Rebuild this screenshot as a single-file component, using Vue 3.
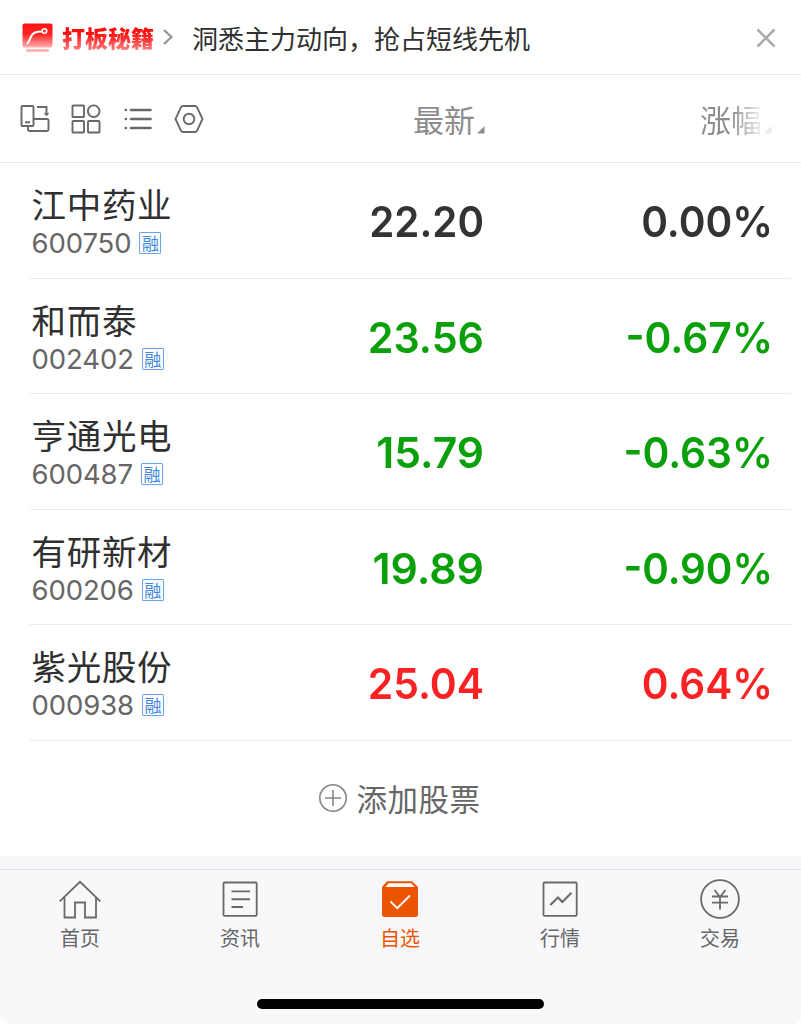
<script setup>
const stocks = [
  { name: '江中药业', code: '600750', price: '22.20', change: '0.00%', tone: 'flat', priceScale: 0.937, changeScale: 0.944 },
  { name: '和而泰', code: '002402', price: '23.56', change: '-0.67%', tone: 'down', priceScale: 0.96, changeScale: 0.951 },
  { name: '亨通光电', code: '600487', price: '15.79', change: '-0.63%', tone: 'down', priceScale: 0.99, changeScale: 0.948 },
  { name: '有研新材', code: '600206', price: '19.89', change: '-0.90%', tone: 'down', priceScale: 0.995, changeScale: 0.938 },
  { name: '紫光股份', code: '000938', price: '25.04', change: '0.64%', tone: 'up', priceScale: 0.95, changeScale: 0.944 },
]
const tabs = [
  { id: 'home', label: '首页' },
  { id: 'news', label: '资讯' },
  { id: 'picks', label: '自选' },
  { id: 'market', label: '行情' },
  { id: 'trade', label: '交易' },
]
</script>

<template>
  <div class="screen">
    <section class="banner">
      <svg class="promo-icon" width="32" height="30" viewBox="0 0 32 30">
        <defs>
          <linearGradient id="promoFill" x1="0" y1="0" x2="0" y2="1">
            <stop offset="0" stop-color="#ff1010" />
            <stop offset="0.45" stop-color="#ff2424" />
            <stop offset="1" stop-color="#ffb0b0" />
          </linearGradient>
        </defs>
        <rect x="0.5" y="0.5" width="30" height="24" rx="2" fill="url(#promoFill)" />
        <path d="M5.500 20.300C8 18.500 8 11.500 13 9.500C15.500 8.400 18 8.500 20.500 8.500" fill="none" stroke="#fff" stroke-width="2" stroke-linecap="round" />
        <circle cx="22.500" cy="8" r="2.300" fill="#ff3030" stroke="#fff" stroke-width="1.500" />
        <rect x="4" y="26.300" width="23" height="2.500" rx="1.200" fill="#ffaaaa" />
      </svg>
      <strong class="promo">打板秘籍</strong>
      <svg class="arrow" width="12" height="18" viewBox="0 0 12 18"><path d="M2 2L9.500 9L2 16" fill="none" stroke="#929292" stroke-width="2.200" /></svg>
      <span class="slogan">洞悉主力动向，抢占短线先机</span>
      <svg class="close" width="20" height="20" viewBox="0 0 20 20"><path d="M1.500 1.500L18.500 18.500M18.500 1.500L1.500 18.500" stroke="#aaa" stroke-width="2.500" /></svg>
    </section>

    <section class="toolbar">
      <div class="tools">
        <svg width="30" height="30" viewBox="0 0 30 30">
          <rect x="1.500" y="2" width="12" height="20" rx="1" />
          <path d="M5 18.300H10M17 3H26.500V10M14 15H27Q28.500 15 28.500 16.500V25.500Q28.500 27 27 27H9.500Q8 27 8 25.500V22" />
          <path d="M24 9.200H29L26.500 12Z" fill="#696969" stroke-width="0.500" />
        </svg>
        <svg width="30" height="30" viewBox="0 0 30 30">
          <rect x="1.500" y="1.500" width="11.500" height="11.500" rx="0.800" /><circle cx="22.700" cy="7.200" r="5.800" />
          <rect x="1.500" y="17" width="11.500" height="11.500" rx="0.800" /><rect x="17" y="17" width="11.500" height="11.500" rx="0.800" />
        </svg>
        <svg class="list-icon" width="30" height="30" viewBox="0 0 30 30"><path d="M8 6H27.500M8 15H27.500M8 24H27.500M2.800 6H2.900M2.800 15H2.900M2.800 24H2.900" /></svg>
        <svg width="30" height="30" viewBox="0 0 30 30"><path d="M9 2H21Q22.200 2 23 3.200L28.500 15L23 26.800Q22.200 28 21 28H9Q7.800 28 7 26.800L1.500 15L7 3.200Q7.800 2 9 2Z" /><circle cx="15" cy="15" r="5.300" /></svg>
      </div>
      <div class="heading latest">最新<svg width="8" height="8" viewBox="0 0 8 8"><path d="M7.500 0V7.500H0Z" fill="#8d8d94" /></svg></div>
      <div class="heading rise"><span>涨幅</span><svg width="8" height="8" viewBox="0 0 8 8"><path d="M7.500 0V7.500H0Z" fill="#eaeaea" /></svg></div>
    </section>

    <main>
      <article v-for="s in stocks" :key="s.code" class="stock">
        <div class="identity">
          <div class="name">{{ s.name }}</div>
          <div class="code-line"><span class="code">{{ s.code }}</span><span class="badge">融</span></div>
        </div>
        <div class="number" :class="s.tone" :style="{ transform: `scaleX(${s.priceScale})` }">{{ s.price }}</div>
        <div class="number change" :class="s.tone" :style="{ transform: `scaleX(${s.changeScale})` }">{{ s.change }}</div>
      </article>
      <div class="add">
        <svg width="28" height="28" viewBox="0 0 28 28"><path d="M14 6V22M6 14H22" /><circle cx="14" cy="14" r="13.200" /></svg>
        <span>添加股票</span>
      </div>
    </main>

    <div class="gap"></div>
    <footer>
      <nav>
        <div v-for="t in tabs" :key="t.id" class="tab" :class="{ active: t.id === 'picks' }">
          <svg width="44" height="42" viewBox="0 0 44 42">
            <g v-if="t.id === 'home'"><path d="M1.700 22.300L22 2.800L42.300 22.300M6.500 18V38.500H17V23.500H27V38.500H38V18" /></g>
            <g v-else-if="t.id === 'news'"><rect x="5.500" y="3.500" width="33.200" height="33.300" rx="1" /><path d="M13.500 12.400H32M13.500 20.200H32M13.500 28H25" stroke-width="1.900" /></g>
            <g v-else-if="t.id === 'picks'">
              <path d="M4 8L9 2.200H34L40 8V35Q40 38 37.500 38H6.500Q4 38 4 35Z" fill="#eb5502" stroke="none" />
              <path d="M7.500 8L10.500 4.200H33.300L36.700 8Z" fill="#fff" stroke="none" />
              <path d="M12.500 22.500L19.300 29.200L32 16.500" stroke="#fff" stroke-width="1.800" />
            </g>
            <g v-else-if="t.id === 'market'"><rect x="5.500" y="3.500" width="33.200" height="33.300" rx="1" /><path d="M12.300 26L20 18.500L24.300 23L33.500 13.800" stroke-width="2" /></g>
            <g v-else><circle cx="22" cy="20" r="18.900" /><path d="M16.500 11L22 18L27.500 11M14 17.500H30M14 23.700H30M22 18V30.500" /></g>
          </svg>
          <span>{{ t.label }}</span>
        </div>
      </nav>
      <div class="home-indicator"></div>
    </footer>
  </div>
</template>

<style>
html, body { margin: 0; background: #fff; }
</style>
<style scoped>
* { box-sizing: border-box; }
.screen { width: 801px; height: 1024px; background: #fff; overflow: hidden; font-family: "Noto Sans CJK SC", sans-serif; color: #303030; }
svg { display: block; flex: none; }
.banner { height: 75px; border-bottom: 1px solid #ebebeb; display: flex; align-items: center; padding: 0 25px 0 22px; }
.promo-icon { margin-top: 1px; }
.promo { margin-left: 8px; font-size: 23px; line-height: 34px; width: 93px; white-space: nowrap; font-weight: 900; color: transparent; background: linear-gradient(#ff1010 40%, #ff8080 90%); background-clip: text; -webkit-background-clip: text; margin-top: -1px; }
.arrow { margin-left: 7px; }
.slogan { margin-left: 18px; font-size: 26px; line-height: 38px; white-space: nowrap; margin-top: 1px; }
.close { margin-left: auto; margin-top: 2px; }
.toolbar { height: 88px; border-bottom: 1px solid #ebebeb; display: grid; grid-template-columns: 300px 185px 287px; align-items: center; }
.tools { display: flex; gap: 21.500px; padding-left: 19.500px; padding-top: 1px; }
.tools svg { fill: none; stroke: #696969; stroke-width: 1.900; }
.tools .list-icon { stroke-width: 2.600; stroke-linecap: round; }
.heading { display: flex; justify-content: flex-end; align-items: flex-end; font-size: 31px; line-height: 44px; color: #8d8d8d; }
.heading svg { margin-left: 2px; margin-bottom: 7px; }
.rise span { color: transparent; background: linear-gradient(90deg, #8d8d8d 50%, #f4f4f4 100%); background-clip: text; -webkit-background-clip: text; }
.stock { height: 115.500px; margin: 0 10px 0 30px; border-bottom: 1px solid #ebebeb; display: grid; grid-template-columns: 200px 254px 288px; }
.identity { padding: 16px 0 0 1.500px; }
.name { font-size: 34.500px; line-height: 48px; letter-spacing: 0.700px; }
.code-line { display: flex; align-items: center; height: 32px; }
.code { font-family: Inter, sans-serif; font-size: 27.500px; line-height: 30px; color: #666; letter-spacing: -0.100px; }
.badge { width: 22px; height: 22px; margin-left: 8px; border: 1px solid #69a5eb; border-radius: 1px; color: #3e87dc; font-size: 17px; line-height: 19px; text-align: center; }
.number { font-family: Inter, sans-serif; font-weight: 600; font-size: 43px; line-height: 116px; text-align: right; white-space: nowrap; transform-origin: right center; }
.change { position: relative; left: 1px; }
.flat { color: #333; }
.down { color: #09a009; }
.up { color: #fa2222; }
.add { height: 115.500px; width: 799px; display: flex; justify-content: center; align-items: center; gap: 10px; color: #666; font-size: 30.500px; letter-spacing: 0.500px; }
.add svg { fill: none; stroke: #85858b; stroke-width: 1.600; }
.gap { height: 13px; background: #f6f7f9; }
footer { height: 155px; border-top: 1px solid #dfe2e6; background: #f8f8fb; border-radius: 0 0 10px 10px; }
nav { width: 800px; display: grid; grid-template-columns: repeat(5, 1fr); height: 134px; padding-top: 9px; }
.tab { display: flex; flex-direction: column; align-items: center; color: #666; font-size: 20px; line-height: 30px; }
.tab svg { fill: none; stroke: #696969; stroke-width: 1.800; }
.tab span { margin-top: 2px; }
.tab.active { color: #eb5502; }
.home-indicator { width: 287px; height: 10px; border-radius: 5px; background: #000; margin: -5px auto 0; }
</style>
